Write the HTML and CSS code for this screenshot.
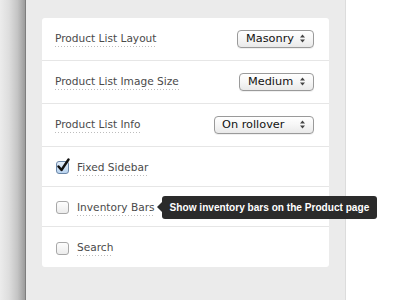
FILE: index.html
```html
<!DOCTYPE html>
<html>
<head>
<meta charset="utf-8">
<link rel="stylesheet" href="styles.css">
</head>
<body>
<div class="screen">
  <div class="shadow"></div>
  <div class="panel">
    <div class="card">
      <div class="row row-select">
        <span class="label">Product List Layout</span>
        <div class="select sel-masonry"><span class="sel-text">Masonry</span><svg class="arrows" width="5" height="9" viewBox="0 0 5 9"><path d="M0 3.5 L2.5 0.5 L5 3.5 Z M0 5.5 L2.5 8.5 L5 5.5 Z" fill="#444"/></svg></div>
      </div>
      <div class="row row-select">
        <span class="label">Product List Image Size</span>
        <div class="select sel-medium"><span class="sel-text">Medium</span><svg class="arrows" width="5" height="9" viewBox="0 0 5 9"><path d="M0 3.5 L2.5 0.5 L5 3.5 Z M0 5.5 L2.5 8.5 L5 5.5 Z" fill="#444"/></svg></div>
      </div>
      <div class="row row-select">
        <span class="label">Product List Info</span>
        <div class="select sel-info"><span class="sel-text">On rollover</span><svg class="arrows" width="5" height="9" viewBox="0 0 5 9"><path d="M0 3.5 L2.5 0.5 L5 3.5 Z M0 5.5 L2.5 8.5 L5 5.5 Z" fill="#444"/></svg></div>
      </div>
      <div class="row row-check">
        <span class="checkbox checked"><svg class="tick" width="14" height="15" viewBox="0 0 14 15"><path d="M2.5 8.5 L5.5 12 L12.5 1.5" fill="none" stroke="#111" stroke-width="2.4" stroke-linecap="round" stroke-linejoin="round"/></svg></span>
        <span class="label">Fixed Sidebar</span>
      </div>
      <div class="row row-check">
        <span class="checkbox"></span>
        <span class="label-wrap">
          <span class="label">Inventory Bars</span>
          <span class="tooltip">Show inventory bars on the Product page</span>
        </span>
      </div>
      <div class="row row-check row-last">
        <span class="checkbox"></span>
        <span class="label">Search</span>
      </div>
    </div>
  </div>
  <div class="outside"></div>
</div>
</body>
</html>
```

FILE: styles.css
```css
html, body {
  margin: 0;
  padding: 0;
  background: #ffffff;
}
body {
  font-family: "DejaVu Sans", "Liberation Sans", sans-serif;
  width: 400px;
  height: 300px;
  overflow: hidden;
}
.screen {
  display: flex;
  height: 300px;
}
.shadow {
  width: 25px;
  flex: none;
  background: linear-gradient(to right, #ececec 0%, #dedede 35%, #c4c4c4 70%, #9c9c9c 100%);
  border-right: 1px solid #7e7e7e;
}
.panel {
  width: 287px;
  flex: none;
  background: #ebebeb;
  border-right: 1px solid #dcdcdc;
  padding: 18px 16px 0 16px;
  position: relative;
  z-index: 1;
}
.outside {
  flex: 1;
  background: #fff;
}
.card {
  background: #fff;
  border-radius: 3px;
}
.row {
  display: flex;
  align-items: center;
  justify-content: space-between;
  padding: 0 15px 0 13px;
  border-bottom: 1px solid #e6e6e6;
  box-sizing: border-box;
}
.row-select { height: 43px; }
.row-check {
  height: 40px;
  justify-content: flex-start;
  padding-left: 14px;
  padding-top: 2px;
}
.row-last { border-bottom: none; }
.label {
  font-size: 10.6px;
  line-height: 14px;
  color: #4a4a4a;
  padding-bottom: 2px;
  background: linear-gradient(to right, #bdbdbd 1px, transparent 1px) repeat-x left bottom / 3px 1px;
  white-space: nowrap;
}
.row-check .label { margin-left: 8px; }
.label-wrap {
  position: relative;
  display: inline-flex;
  margin-left: 8px;
}
.label-wrap .label { margin-left: 0; }
.select {
  display: flex;
  align-items: center;
  box-sizing: border-box;
  height: 18px;
  border: 1px solid #9a9a9a;
  border-radius: 4px;
  background: linear-gradient(to bottom, #ffffff 0%, #f6f6f6 50%, #e9e9e9 100%);
  box-shadow: 0 1px 0 rgba(0,0,0,0.06);
  padding: 0 8px 0 7px;
  font-size: 11.3px;
  color: #111;
  margin-top: -1px;
}
.sel-text { flex: 1; }
.arrows { flex: none; }
.sel-masonry { width: 77px; padding-left: 8px; }
.sel-medium { width: 75px; padding-left: 8px; }
.sel-info { width: 100px; }
.checkbox {
  position: relative;
  width: 13px;
  height: 13px;
  box-sizing: border-box;
  border: 1px solid #a8a8a8;
  border-radius: 3px;
  background: linear-gradient(to bottom, #fdfdfd 0%, #ececec 100%);
  flex: none;
}
.checkbox.checked {
  border-color: #6b87a8;
  background: linear-gradient(to bottom, #e4effb 0%, #b9d3ef 100%);
}
.tick {
  position: absolute;
  left: -1px;
  top: -4px;
}
.tooltip {
  position: absolute;
  left: 100%;
  top: 50%;
  margin-left: 7px;
  margin-top: -12px;
  height: 23px;
  line-height: 23px;
  padding: 0 8px 0 8px;
  background: #2b2b2b;
  color: #fff;
  border-radius: 3px;
  font-family: "Liberation Sans", Arial, sans-serif;
  font-weight: bold;
  font-size: 10.1px;
  white-space: nowrap;
  z-index: 2;
}
.tooltip::before {
  content: "";
  position: absolute;
  left: -5px;
  top: 50%;
  margin-top: -5px;
  border-style: solid;
  border-width: 5px 5px 5px 0;
  border-color: transparent #2b2b2b transparent transparent;
}
```
